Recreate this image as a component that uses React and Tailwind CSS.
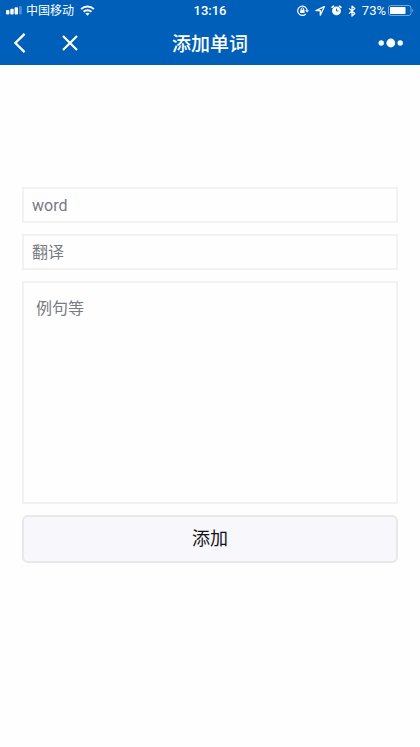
import { useState } from "react";

const fieldClass =
  "w-full border-2 border-[#f2f2f2] text-base text-gray-800 outline-none placeholder:text-[#777b82]";

function SignalIcon() {
  return (
    <svg width="16" height="9" viewBox="0 0 16 9" fill="currentColor" aria-hidden="true">
      <rect x="0" y="4" width="3.4" height="4.4" rx="1" />
      <rect x="4.3" y="2.8" width="3.4" height="5.6" rx="1" />
      <rect x="8.6" y="1.2" width="3.4" height="7.2" rx="1" />
      <rect x="13" y="0" width="2.8" height="8.4" rx="1" opacity="0.3" />
    </svg>
  );
}

function WifiIcon() {
  return (
    <svg width="15" height="11" viewBox="0 0 14 11" aria-hidden="true">
      <g fill="none" stroke="currentColor" strokeWidth="2">
        <path d="M0.6 4.1 C4.2 0.6 9.8 0.6 13.4 4.1" />
        <path d="M3.1 6.8 C5.3 4.6 8.7 4.6 10.9 6.8" />
      </g>
      <path d="M4.9 8.5 C6.1 7.4 7.9 7.4 9.1 8.5 L7 10.8 Z" fill="currentColor" />
    </svg>
  );
}

function RotationLockIcon() {
  return (
    <svg width="12" height="11" viewBox="0 0 12 11" fill="none" stroke="currentColor" aria-hidden="true">
      <path d="M8.8 9 A4.7 4.7 0 1 1 10.1 5.5" strokeWidth="1.2" />
      <path d="M8.1 5.2 H12 L10.1 7.6 Z" fill="currentColor" stroke="none" />
      <rect x="3.2" y="4.8" width="4.4" height="3.2" rx="0.3" fill="currentColor" stroke="none" />
      <path d="M4.2 5 V4 a1.2 1.2 0 0 1 2.4 0 V5" strokeWidth="0.9" />
    </svg>
  );
}

function LocationIcon() {
  return (
    <svg width="10" height="10" viewBox="0 0 10 10" fill="none" aria-hidden="true">
      <path d="M9.3 0.7 L0.9 4.6 H5.3 V9.2 Z" stroke="currentColor" strokeWidth="1.3" strokeLinejoin="round" />
    </svg>
  );
}

function AlarmIcon() {
  return (
    <svg width="11" height="11" viewBox="0 0 11 11" fill="none" aria-hidden="true">
      <circle cx="5.5" cy="5.9" r="4.4" fill="currentColor" />
      <path d="M1 2.4 L2.6 1.1 M10 2.4 L8.4 1.1" stroke="currentColor" strokeWidth="1.5" strokeLinecap="round" />
      <path d="M5.5 3.6 V6 H7.4" stroke="#005fb8" strokeWidth="0.9" />
    </svg>
  );
}

function BluetoothIcon() {
  return (
    <svg width="8" height="12" viewBox="0 0 8 12" fill="none" stroke="currentColor" aria-hidden="true">
      <path d="M1 3.4 L6.8 8.5 L4 11 V1 L6.8 3.5 L1 8.6" strokeWidth="1.2" strokeLinejoin="round" />
    </svg>
  );
}

function BatteryIcon() {
  return (
    <svg width="26" height="11" viewBox="0 0 26 11" fill="none" aria-hidden="true">
      <rect x="0.5" y="0.5" width="22.5" height="10" rx="2.4" stroke="currentColor" opacity="0.45" />
      <rect x="2" y="2" width="15.5" height="7" rx="0.8" fill="currentColor" />
      <path d="M24.3 3.8 C25.6 4.3 25.6 6.7 24.3 7.2 Z" fill="currentColor" opacity="0.5" />
    </svg>
  );
}

function StatusBar() {
  return (
    <div className="grid h-[21px] grid-cols-[1fr_auto_1fr] items-center px-1.5 text-[13px] leading-5">
      <div className="flex items-center gap-1">
        <SignalIcon />
        <span className="text-xs">中国移动</span>
        <span className="pl-0.5">
          <WifiIcon />
        </span>
      </div>
      <time className="font-medium">13:16</time>
      <div className="flex items-center justify-end gap-1.5">
        <RotationLockIcon />
        <LocationIcon />
        <AlarmIcon />
        <BluetoothIcon />
        <div className="flex items-center gap-0.5">
          <span>73%</span>
          <BatteryIcon />
        </div>
      </div>
    </div>
  );
}

function NavBar() {
  return (
    <div className="grid h-11 grid-cols-[1fr_auto_1fr] items-center px-3">
      <div className="flex items-center gap-9">
        <button type="button" aria-label="返回">
          <svg width="14" height="20" viewBox="0 0 14 20" fill="none" stroke="currentColor" strokeWidth="2.3">
            <path d="M12.6 0.9 L3.4 10 L12.6 19.1" />
          </svg>
        </button>
        <button type="button" aria-label="关闭">
          <svg width="16" height="16" viewBox="0 0 16 16" fill="none" stroke="currentColor" strokeWidth="2.2">
            <path d="M1 1 L15 15 M15 1 L1 15" />
          </svg>
        </button>
      </div>
      <h1 className="pt-1 text-[19px] leading-6 font-medium">添加单词</h1>
      <button type="button" aria-label="更多" className="justify-self-end pr-1">
        <svg width="26" height="10" viewBox="0 0 26 10" fill="currentColor">
          <circle cx="3.2" cy="5" r="2.7" />
          <circle cx="12.8" cy="5" r="4.4" />
          <circle cx="22.2" cy="5" r="2.7" />
        </svg>
      </button>
    </div>
  );
}

export default function App() {
  const [form, setForm] = useState({ word: "", translation: "", example: "" });

  const update = (event) => {
    const { name, value } = event.target;
    setForm((prev) => ({ ...prev, [name]: value }));
  };

  return (
    <div className="min-h-screen bg-[#fefefe] font-['Roboto','Noto_Sans_CJK_SC',sans-serif]">
      <header className="bg-[#005fb8] text-white">
        <StatusBar />
        <NavBar />
      </header>
      <main className="px-[22px] pt-[122px]">
        <form className="flex flex-col gap-[11px]" onSubmit={(event) => event.preventDefault()}>
          <input
            name="word"
            aria-label="word"
            placeholder="word"
            value={form.word}
            onChange={update}
            className={`h-9 px-2 ${fieldClass}`}
          />
          <input
            name="translation"
            aria-label="翻译"
            placeholder="翻译"
            value={form.translation}
            onChange={update}
            className={`h-9 px-2 ${fieldClass}`}
          />
          <textarea
            name="example"
            aria-label="例句等"
            placeholder="例句等"
            value={form.example}
            onChange={update}
            className={`h-[223px] resize-none px-3 py-3.5 ${fieldClass}`}
          />
          <button type="submit" className="h-12 w-full rounded-md border-2 border-[#e8e7ea] bg-[#f8f7fb] text-lg text-[#111318]">
            添加
          </button>
        </form>
      </main>
    </div>
  );
}
